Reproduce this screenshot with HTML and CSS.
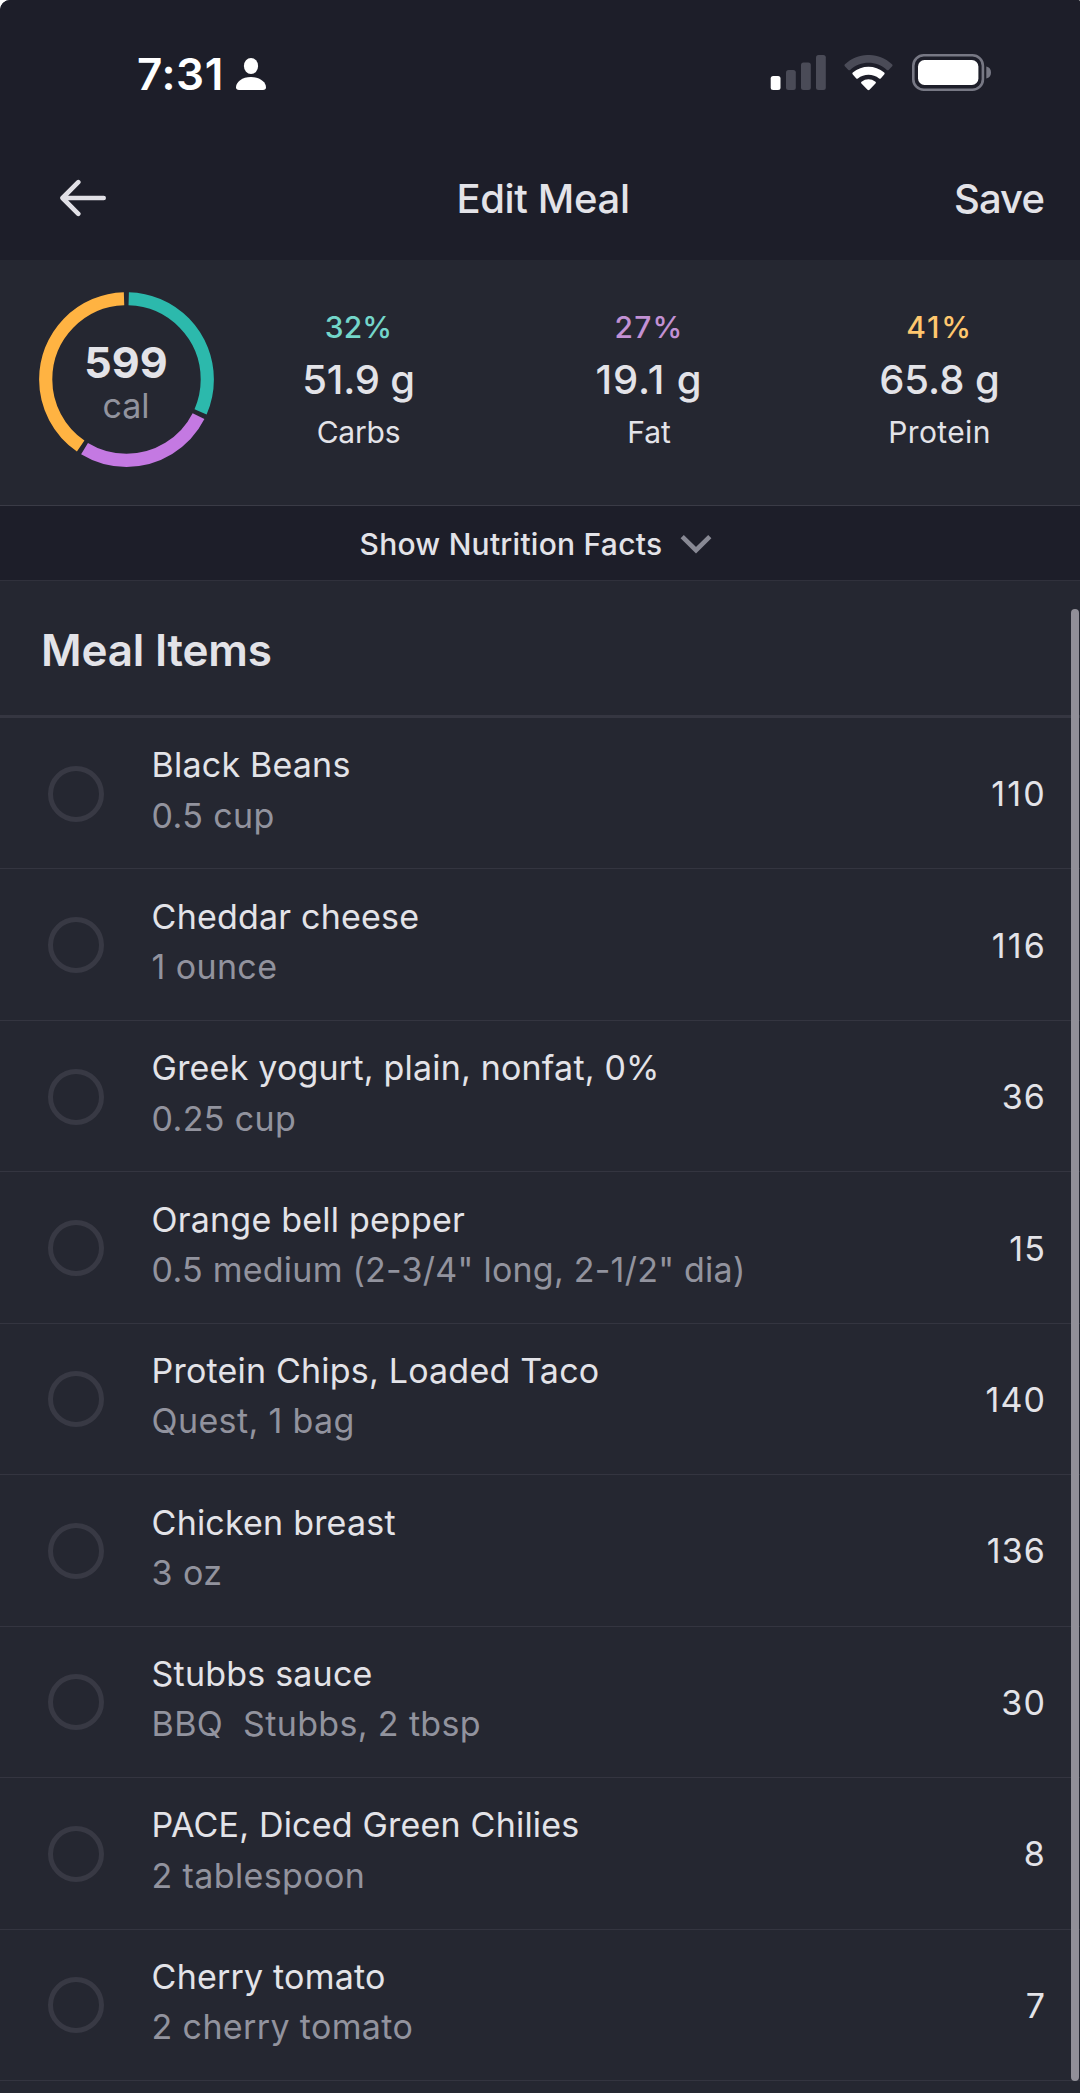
FILE: index.html
```html
<!DOCTYPE html>
<html lang="en">
<head>
<meta charset="utf-8">
<title>Edit Meal</title>
<link rel="stylesheet" href="styles.css">
</head>
<body>
<div class="screen">
  <header class="top">
    <div class="status">
      <div class="clock">
        <span class="time">7:31</span>
        <svg class="person" width="30" height="32" viewBox="0 0 30 32" fill="#fff"><ellipse cx="15" cy="8" rx="7.1" ry="8"/><path d="M3 32C1 32 0 31 0 29.2C0 24 6.200 19 15 19S30 24 30 29.200C30 31 29 32 27 32Z"/></svg>
      </div>
      <div class="indicators">
        <svg width="56" height="36" viewBox="0 0 56 36"><rect x="0.700" y="21" width="9.800" height="14" rx="2.500" fill="#fff"/><g fill="#4a4b57"><rect x="16" y="15" width="9.800" height="20" rx="2.500"/><rect x="31" y="7.500" width="9.800" height="27.500" rx="2.500"/><rect x="46" y="0" width="9.800" height="35" rx="2.500"/></g></svg>
        <svg class="wifi" width="50" height="36" viewBox="0 0 50 36"><path d="M.8 11.300Q0 10.200 1 9.200C14.500-3.100 34.500-3.100 48 9.200Q49 10.200 48.200 11.200L44.600 15Q43.800 15.700 42.900 14.900C32.500 5.300 16.500 5.300 6.100 14.900Q5.200 15.700 4.400 15Z" fill="#4a4b57"/><path d="M8.600 19.200Q7.900 18.300 8.800 17.500C18 9.800 31 9.800 40.200 17.500Q41.100 18.300 40.400 19.200L36.700 23.500Q36 24.200 35.100 23.500C29 18.500 20 18.500 13.900 23.500Q13 24.200 12.300 23.500ZM17.200 28.200Q16.700 27.300 17.500 26.700C22 23.400 27 23.400 31.500 26.700Q32.300 27.300 31.700 28.200L25.500 34.800Q24.500 35.700 23.500 34.800Z" fill="#fff"/></svg>
        <svg class="battery" width="80" height="37" viewBox="0 0 80 37"><rect x="1.300" y="1.300" width="69.600" height="34.400" rx="10.500" fill="none" stroke="#777884" stroke-width="2.600"/><rect x="6" y="6" width="60.400" height="25" rx="6.500" fill="#fff"/><path d="M74.300 12.500C77.400 13 79 15.500 79 18.500S77.400 24 74.300 24.500Z" fill="#777884"/></svg>
      </div>
    </div>
    <nav class="nav">
      <svg class="back" width="48" height="40" viewBox="0 0 48 40" fill="none" stroke="#e1e0e6" stroke-width="4.600" stroke-linecap="round" stroke-linejoin="round"><path d="M19.300 3.200 3.500 19 19.300 34.800M4.500 19H44.700"/></svg>
      <h1 class="title">Edit Meal</h1>
      <span class="save">Save</span>
    </nav>
  </header>

  <section class="summary">
    <div class="ring">
      <svg class="ring-chart" width="175" height="175" viewBox="-87.500 -87.500 175 175" fill="none" stroke-width="13.200">
        <g transform="rotate(-90)">
          <circle r="80.800" pathLength="100" stroke="#2cb9ac" stroke-dasharray="31.100 68.900" stroke-dashoffset="-.45"/>
          <circle r="80.800" pathLength="100" stroke="#c479e2" stroke-dasharray="26.200 73.800" stroke-dashoffset="-32.500"/>
          <circle r="80.800" pathLength="100" stroke="#ffb342" stroke-dasharray="39.900 60.100" stroke-dashoffset="-59.600"/>
        </g>
      </svg>
      <div class="ring-label"><span class="ring-value">599</span><span class="ring-unit">cal</span></div>
    </div>
    <div class="macro carbs"><span class="pct">32%</span><span class="grams">51.9 g</span><span class="name">Carbs</span></div>
    <div class="macro fat"><span class="pct">27%</span><span class="grams">19.1 g</span><span class="name">Fat</span></div>
    <div class="macro protein"><span class="pct">41%</span><span class="grams">65.8 g</span><span class="name">Protein</span></div>
  </section>

  <div class="facts">
    <span>Show Nutrition Facts</span>
    <svg width="32" height="20" viewBox="0 0 32 20" fill="none" stroke="#888994" stroke-width="4.600"><path d="M2.200 2.700 16 16.200 29.800 2.700"/></svg>
  </div>

  <main class="items">
    <h2 class="items-title">Meal Items</h2>
    <ul class="list">
      <li class="row"><i class="check"></i><div class="info"><span>Black Beans</span><span class="qty">0.5 cup</span></div><b class="cal ones">110</b></li>
      <li class="row"><i class="check"></i><div class="info"><span>Cheddar cheese</span><span class="qty">1 ounce</span></div><b class="cal ones">116</b></li>
      <li class="row"><i class="check"></i><div class="info"><span>Greek yogurt, plain, nonfat, 0%</span><span class="qty">0.25 cup</span></div><b class="cal">36</b></li>
      <li class="row"><i class="check"></i><div class="info"><span>Orange bell pepper</span><span class="qty long">0.5 medium (2-3/4" long, 2-1/2" dia)</span></div><b class="cal">15</b></li>
      <li class="row"><i class="check"></i><div class="info"><span>Protein Chips, Loaded Taco</span><span class="qty">Quest, 1 bag</span></div><b class="cal">140</b></li>
      <li class="row"><i class="check"></i><div class="info"><span>Chicken breast</span><span class="qty">3 oz</span></div><b class="cal">136</b></li>
      <li class="row"><i class="check"></i><div class="info"><span>Stubbs sauce</span><span class="qty">BBQ&nbsp; Stubbs, 2 tbsp</span></div><b class="cal">30</b></li>
      <li class="row"><i class="check"></i><div class="info"><span>PACE, Diced Green Chilies</span><span class="qty">2 tablespoon</span></div><b class="cal">8</b></li>
      <li class="row"><i class="check"></i><div class="info"><span>Cherry tomato</span><span class="qty">2 cherry tomato</span></div><b class="cal">7</b></li>
    </ul>
    <div class="scrollbar"></div>
  </main>
</div>
</body>
</html>
```
FILE: styles.css
```css
* { box-sizing: border-box; margin: 0; padding: 0; }
html { background: #fff; }
body { font-family: "Inter", "Liberation Sans", sans-serif; color: #e3e3e8; }
svg { display: block; flex: none; }

.screen {
  width: 1080px;
  height: 2093px;
  background: #252731;
  border-radius: 10px 2px 0 0;
  overflow: hidden;
  display: flex;
  flex-direction: column;
}

/* status bar and navigation */
.top { height: 260px; background: #1d1e29; }
.status {
  height: 138px;
  padding: 54px 88px 0 137px;
  display: flex;
  justify-content: space-between;
  align-items: flex-start;
}
.clock { display: flex; gap: 12.5px; color: #fff; }
.time { font-size: 44px; font-weight: 600; line-height: 40px; letter-spacing: .6px; }
.person { margin-top: 4px; }
.indicators { display: flex; }
.indicators svg { margin-top: 1px; }
.indicators .wifi { margin-left: 18px; }
.indicators .battery { margin: 0 0 0 18px; }
.nav {
  height: 122px;
  padding: 0 36px 0 59px;
  display: grid;
  grid-template-columns: 1fr auto 1fr;
  align-items: center;
}
.title, .save { font-size: 40px; font-weight: 500; line-height: 50px; }
.title { letter-spacing: -.35px; margin-right: 17px; }
.save { justify-self: end; letter-spacing: -.9px; }

/* calorie and macro summary */
.summary {
  height: 245px;
  padding: 32px 0 0 38.5px;
  display: grid;
  grid-template-columns: 175px 290px 291px 290px;
  align-items: start;
}
.ring { display: grid; }
.ring > * { grid-area: 1 / 1; }
.ring-label { display: flex; flex-direction: column; align-items: center; padding-top: 46px; }
.ring-value { font-size: 43px; font-weight: 700; line-height: 48px; }
.ring-unit { font-size: 34px; line-height: 39px; color: #92939e; }
.macro { display: flex; flex-direction: column; align-items: center; padding-top: 15px; }
.pct { font-size: 30px; font-weight: 500; line-height: 40px; }
.grams { font-size: 40px; font-weight: 500; line-height: 65px; }
.name { font-size: 30px; line-height: 40px; }
.carbs .pct { color: #74d6ca; letter-spacing: .2px; }
.fat .pct { color: #c291d4; letter-spacing: 1.2px; }
.protein .pct { color: #ffc76e; letter-spacing: 1.8px; }
.carbs .grams { letter-spacing: -.2px; }
.fat .grams { letter-spacing: .9px; }
.carbs .name { letter-spacing: -.2px; }
.protein .name { letter-spacing: .4px; }

.facts {
  height: 76px;
  background: #1d1e29;
  border-top: 1px solid #3a3b46;
  border-bottom: 1px solid #30313c;
  padding: 2px 0 0 359.5px;
  display: flex;
  align-items: center;
  gap: 17.5px;
  font-size: 30px;
  font-weight: 500;
  letter-spacing: .25px;
}

/* meal items */
.items { position: relative; }
.items-title {
  height: 137px;
  padding-left: 41px;
  border-bottom: 3px solid #353641;
  font-size: 44px;
  font-weight: 600;
  line-height: 138px;
  letter-spacing: -.2px;
}
.list { list-style: none; height: 1363px; display: grid; grid-template-rows: repeat(9, 1fr); }
.row {
  padding: 1px 35px 0 48px;
  border-bottom: 1px solid #343540;
  display: flex;
  align-items: center;
  font-size: 34px;
}
.check { width: 56px; height: 56px; border: 5px solid #383944; border-radius: 50%; }
.info {
  flex: 1;
  margin-left: 47.6px;
  padding-bottom: 6px;
  display: flex;
  flex-direction: column;
  line-height: 50.4px;
  letter-spacing: .2px;
}
.qty { color: #92939e; letter-spacing: .36px; }
.qty.long { letter-spacing: .24px; }
.cal { font-weight: 400; letter-spacing: 1.1px; margin-right: -1px; }
.ones { letter-spacing: 2.2px; margin-right: -2px; }
.scrollbar {
  position: absolute;
  top: 28px;
  right: 1.5px;
  width: 8px;
  height: 1472px;
  border-radius: 4px;
  background: #918f98;
}
```
